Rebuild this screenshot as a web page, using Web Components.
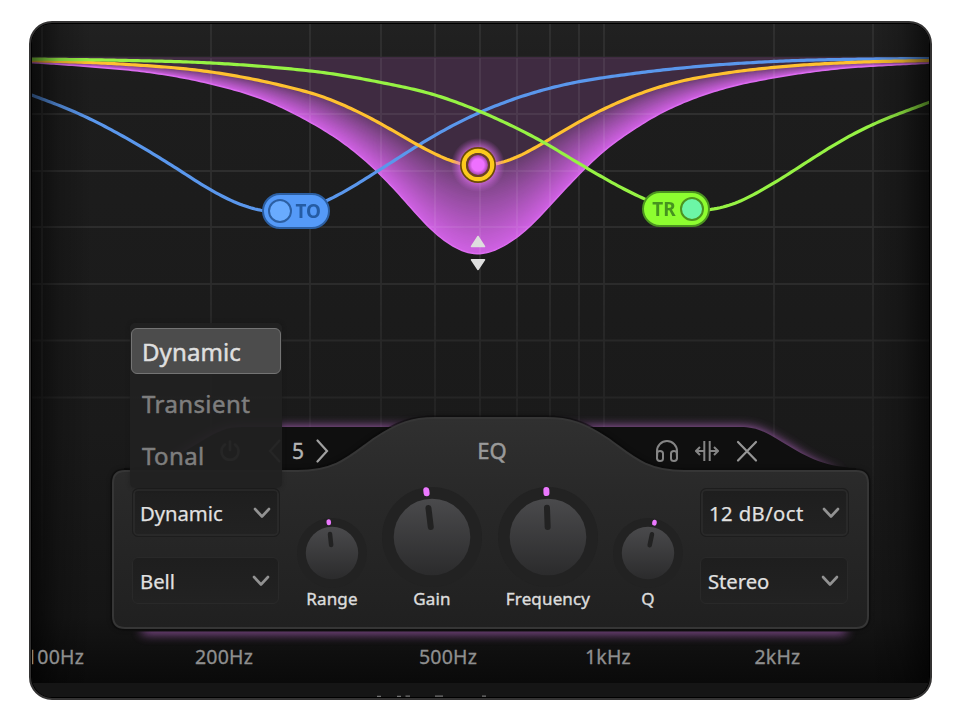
<!DOCTYPE html>
<html lang="en">
<head>
<meta charset="utf-8">
<title>Equalizer</title>
<style>
html,body{margin:0;height:100%;background:#fff;overflow:hidden}
body{font-family:"Noto Sans","Open Sans",sans-serif}
</style>
</head>
<body>
<eq-window>
  <eq-plot slot="plot"></eq-plot>
  <eq-node slot="overlay" style="left:230px;top:169px" label="TO" tone="blue"></eq-node>
  <eq-node slot="overlay" style="left:610px;top:167px" label="TR" tone="green" flip></eq-node>
  <eq-panel slot="overlay">
    <eq-select slot="left" class="tall">Dynamic</eq-select>
    <eq-select slot="left">Bell</eq-select>
    <eq-knob slot="knobs" size="72" angle="-6">Range</eq-knob>
    <eq-knob slot="knobs" size="104" angle="-7">Gain</eq-knob>
    <eq-knob slot="knobs" size="104" angle="-2">Frequency</eq-knob>
    <eq-knob slot="knobs" size="72" angle="12">Q</eq-knob>
    <eq-select slot="right" class="tall" style="letter-spacing:.4px;padding-left:8px">12 dB/oct</eq-select>
    <eq-select slot="right">Stereo</eq-select>
  </eq-panel>
  <eq-menu slot="overlay">
    <eq-option selected>Dynamic</eq-option>
    <eq-option>Transient</eq-option>
    <eq-option>Tonal</eq-option>
  </eq-menu>
  <eq-axis slot="overlay"></eq-axis>
</eq-window>
<script>
const define = (name, html, setup) => customElements.define(name, class extends HTMLElement {
  connectedCallback() {
    if (this.shadowRoot) return;
    const t = document.createElement('template');
    t.innerHTML = typeof html === 'function' ? html(this) : html;
    this.attachShadow({mode: 'open'}).append(t.content.cloneNode(true));
    if (setup) setup(this);
  }
});

define('eq-window', `<style>
:host{display:block;box-sizing:border-box;width:903px;height:679px;margin:21px 0 0 29px;border:2px solid #343333;border-radius:23px;background:#000;padding:1px;overflow:hidden}
.in{position:relative;width:897px;height:673px;border-radius:20px;overflow:hidden;background:#1b1b1b}
</style><div class="in"><slot name="plot"></slot><slot name="overlay"></slot></div>`);

/* Cubic Hermite value of a point list at x */
function sample(p, x) {
  let i = 0;
  while (i < p.length - 2 && p[i + 1][0] < x) i++;
  const slope = (a, b) => (b[1] - a[1]) / (b[0] - a[0]);
  if (x < p[0][0]) return p[0][1] + slope(p[0], p[1]) * (x - p[0][0]);
  const last = p[p.length - 1];
  if (x > last[0]) return last[1] + slope(p[p.length - 2], last) * (x - last[0]);
  const tan = j => {
    if (j === 0) return slope(p[0], p[1]);
    if (j === p.length - 1) return slope(p[j - 1], p[j]);
    const h0 = p[j][0] - p[j - 1][0], h1 = p[j + 1][0] - p[j][0];
    return (slope(p[j - 1], p[j]) * h1 + slope(p[j], p[j + 1]) * h0) / (h0 + h1);
  };
  const b = p[i], c = p[i + 1], w = c[0] - b[0], t = (x - b[0]) / w;
  const m1 = tan(i) * w, m2 = tan(i + 1) * w, t2 = t * t, t3 = t2 * t;
  return (2*t3 - 3*t2 + 1) * b[1] + (t3 - 2*t2 + t) * m1 + (3*t2 - 2*t3) * c[1] + (t3 - t2) * m2;
}
const control = {
  green: [[30,59],[120,60.3],[211,63],[273,67.3],[330,73.5],[381,82.5],[435,95],[480,111.5],[543,142],[585,167],[630,192],[660,205],[685,210.5],[710,209.5],[730,205],[773,183.5],[807,162],[847,137.5],[873,124.5],[930,102]],
  blue: [[30,94.5],[63,107],[87,117.5],[127,138.5],[172,165.500],[211,190],[237,203],[262,210.5],[285,212],[306,208.500],[330,199],[377,171.5],[418,145.500],[450,127],[482,111.5],[520,97],[563,85],[630,74],[687,67.5],[773,61.5],[873,59],[930,58.5]],
  orange: [[30,60.5],[120,64],[211,72],[273,83.500],[330,99.500],[373,119.500],[418,145],[443,157.500],[460,163.5],[478,166],[497,163.5],[517,157],[543,143],[577,123],[625,99.500],[670,84],[720,74],[773,67.5],[850,62.5],[930,60.5]],
  pink: [[30,62.5],[87,66.5],[153,73],[211,84],[267,101],[307,120.5],[330,134],[350,148],[375,169.5],[397,192],[433,231],[453,246],[478,254],[503,246],[523,232.5],[560,194.5],[585,168.5],[607,148.5],[630,132],[653,117.5],[690,100],[730,87],[773,78],[827,70],[930,63]]
};
/* Curves resampled every 3px and smoothed; the second pass gives back the depth of the dip */
const X0 = -30, STEP = 3, COUNT = 341;
function smooth(a, sigma) {
  const R = Math.ceil(sigma), w = [];
  for (let k = -3 * R; k <= 3 * R; k++) w.push(Math.exp(-k * k / (2 * sigma * sigma)));
  return a.map((_, i) => {
    let s = 0, n = 0;
    w.forEach((g, j) => { const k = i + j - 3 * R; if (k >= 0 && k < a.length) { s += g * a[k]; n += g; } });
    return s / n;
  });
}
const curves = {};
for (const name in control) {
  const raw = Array.from({length: COUNT}, (_, i) => sample(control[name], X0 + i * STEP));
  const g = smooth(raw, 4), gg = smooth(g, 4);
  curves[name] = g.map((v, i) => 2 * v - gg[i]);
}
const first = 20, end = 321;
const line = ys => 'M' + ys.slice(first, end).map((y, i) => `${X0 + (i + first) * STEP} ${y.toFixed(2)}`).join('L');
function gradientBands() {
  const from = [94,58,99], to = [207,97,226], N = 48; let s = '';
  for (let k = N; k >= 0; k--) {
    const t = k / N, f = Math.pow(t, .8);
    const col = from.map((v, i) => Math.round(v + (to[i] - v) * f));
    s += `<path d="${line(curves.orange.map((y, i) => y * (1 - t) + curves.pink[i] * t))}V58H30Z" fill="rgb(${col})"/>`;
  }
  return s;
}
const tab = 'M124 468C160 467 180 454 200 442C218 431 226 427 242 427H740C756 427 764 431 782 442C802 454 822 467 856 468V480H124Z';
const glow = 'M140 472C165 467 180 454 200 442C218 431 226 427 242 427H740C756 427 764 431 782 442C802 454 815 465 842 472Z';
define('eq-plot', () => {
  const vs = [42,211,310,381,435,480,517,550,579,604,774,873], hs = [57.5,114,171,227,284,340.5,397.5];
  const grid = vs.map(x => `M${x} 24V683`).join('') + hs.map(y => `M32 ${y}H930`).join('');
  return `<style>:host{display:block}svg{display:block}</style>
<svg width="897" height="673" viewBox="32 24 897 673">
<defs>
<linearGradient id="bg" x2="0" y2="1"><stop offset="0" stop-color="#212121"/><stop offset=".09" stop-color="#1d1d1d"/><stop offset=".62" stop-color="#1a1a1a"/><stop offset=".9" stop-color="#151515"/><stop offset="1" stop-color="#0a0a0a"/></linearGradient>
<linearGradient id="gm" gradientUnits="userSpaceOnUse" x1="0" x2="0" y1="24" y2="683"><stop offset="0" stop-color="#fff"/><stop offset=".35" stop-color="#fff" stop-opacity=".8"/><stop offset=".6" stop-color="#fff" stop-opacity=".45"/><stop offset=".72" stop-color="#fff" stop-opacity=".25"/><stop offset=".9" stop-color="#fff" stop-opacity="0"/></linearGradient>
<mask id="mk"><rect x="32" y="24" width="897" height="659" fill="url(#gm)"/></mask>
<linearGradient id="vl"><stop offset="0" stop-color="#000" stop-opacity=".6"/><stop offset=".45" stop-color="#000" stop-opacity=".2"/><stop offset="1" stop-color="#000" stop-opacity="0"/></linearGradient>
<linearGradient id="vr" x1="1" x2="0"><stop offset="0" stop-color="#000" stop-opacity=".6"/><stop offset=".45" stop-color="#000" stop-opacity=".2"/><stop offset="1" stop-color="#000" stop-opacity="0"/></linearGradient>
<radialGradient id="halo"><stop offset=".62" stop-color="#e878f8" stop-opacity=".7"/><stop offset="1" stop-color="#d060e0" stop-opacity="0"/></radialGradient>
<radialGradient id="core"><stop offset=".6" stop-color="#ee70ff"/><stop offset="1" stop-color="#a044a8"/></radialGradient>
<filter id="bl" x="-10%" y="-40%" width="120%" height="180%"><feGaussianBlur stdDeviation="5.500"/></filter>
<clipPath id="low"><rect x="32" y="631.500" width="897" height="30"/></clipPath>
<clipPath id="fc"><path d="${line(curves.pink)}V58H30Z"/></clipPath>
</defs>
<rect x="32" y="24" width="897" height="659" fill="url(#bg)"/>
<path d="${grid}" stroke="#313131" stroke-width="1.800" mask="url(#mk)"/>
<g>${gradientBands()}</g>
<path d="${line(curves.orange)}V57H30Z" fill="#3f2b41"/>
<path d="${grid}" stroke="#fff" stroke-opacity=".065" stroke-width="2" clip-path="url(#fc)"/>
<g fill="none" stroke-width="3.200">
<path d="${line(curves.pink)}" stroke="#dc6cf0" stroke-width="1.500"/>
<path d="${line(curves.blue)}" stroke="#5a97ec"/>
<path d="${line(curves.orange)}" stroke="#ffc130"/>
<path d="${line(curves.green)}" stroke="#96f244"/>
</g>
<circle cx="478" cy="165" r="27" fill="url(#halo)"/>
<circle cx="478" cy="165" r="18" fill="#6a4a05"/>
<circle cx="478" cy="165" r="14.200" fill="#713b6b" stroke="#fccb1c" stroke-width="4.300"/>
<circle cx="478" cy="165" r="12" fill="#6a4220"/>
<circle cx="478" cy="165" r="10" fill="url(#core)"/>
<path d="M478 236.500L484.500 246.500H471.500ZM478 269.500L484.500 259.800H471.500Z" fill="#dedede" stroke="#dedede" stroke-width="1.500" stroke-linejoin="round"/>
<path d="${glow}" fill="#b868c8" opacity=".95" filter="url(#bl)"/>
<g clip-path="url(#low)"><rect x="142" y="600" width="704" height="34" fill="#a860b8" opacity=".8" filter="url(#bl)"/></g>
<path d="${tab}" fill="#0f0f0f"/>
<rect x="32" y="24" width="60" height="659" fill="url(#vl)"/>
<rect x="869" y="24" width="60" height="659" fill="url(#vr)"/>
<rect x="32" y="683" width="897" height="14" fill="#151515"/>
<path d="M377 696.400H381M397 696.400H401M405.500 696.200H410M435 696.200H443M482 696.200H486" stroke="#8a8a8a" stroke-width="1.200" opacity=".8"/>
</svg>`;
});

define('eq-node', e => `<style>
:host{position:absolute;display:flex;align-items:center;box-sizing:border-box;width:68px;height:36px;border-radius:18px;padding:0 6px 0 4px;gap:3px;font:700 19.500px "Noto Sans",sans-serif;
 --f:#559af8;--b:#2c5fa3;--d:#69abff;--t:#255ca4;background:var(--f);border:2px solid var(--b)}
:host([tone=green]){--f:#8dfd30;--b:#4c9420;--d:#6cf6a6;--t:#46931f}
:host([flip]){flex-direction:row-reverse;padding:0 4px 0 6px;gap:4px}
i{box-sizing:border-box;width:24px;height:24px;border-radius:50%;background:var(--d);border:2.500px solid var(--b);flex:none}
span{color:var(--t);line-height:30px;transform:scaleX(.97)}
</style><i></i><span>${e.getAttribute('label')}</span>`);

const body = 'M113 483Q113 471 125 471H298C338 471 352 454 375 438C398 423 412 418 435 418H546C570 418 584 423 607 438C630 454 644 471 684 471H856Q868 471 868 483V616Q868 628 856 628H125Q113 628 113 616Z';
define('eq-panel', `<style>
:host{position:absolute;left:80px;top:393px;width:757px;height:212px}
.bg{position:absolute;left:-10px;top:-10px}
.wrap{position:relative;height:212px;display:grid;grid-template-rows:53px 159px}
header{display:grid;grid-template-columns:1fr auto 1fr;align-items:start;color:#9b9b9b}
.l{display:flex;align-items:center;padding:22px 0 0 107px;height:24px}
.n{font:400 21px/24px "Noto Sans",sans-serif;margin:0 12px 0 10px;color:#b4b4b4;-webkit-text-stroke:.4px currentColor}
h1{margin:0;font:400 22px/30px "Noto Sans",sans-serif;padding:18px 0 0 3px;-webkit-text-stroke:.5px #999}
.r{display:flex;gap:16px;padding:22px 0 0 148px;align-items:center;justify-content:flex-start}
svg{display:block;flex:none}
main{display:grid;grid-template-columns:148px 400px 149px;padding-left:20px;column-gap:4px}
.s{display:flex;flex-direction:column;gap:20px;padding-top:18px}
.s.b{margin-left:12px;width:149px}
.k{display:grid;grid-template-columns:96px 104px 128px 72px;align-items:end;padding-bottom:20px}
</style>
<svg class="bg" width="777" height="232" viewBox="102 407 777 232"><defs><linearGradient id="p" x2="0" y2="1"><stop offset="0" stop-color="#303030"/><stop offset=".35" stop-color="#292929"/><stop offset="1" stop-color="#202020"/></linearGradient>
<filter id="s" x="-5%" y="-10%" width="110%" height="120%"><feGaussianBlur stdDeviation="3"/></filter></defs>
<path d="${body}" fill="#0b0b0b" opacity=".6" filter="url(#s)"/>
<path d="${body}" fill="url(#p)" stroke="#0b0b0b" stroke-width="5" stroke-opacity=".55"/>
<path d="${body}" fill="url(#p)" stroke="#363636" stroke-width="2"/></svg>
<div class="wrap"><header>
<div class="l"><svg width="22" height="24" viewBox="0 0 22 24" fill="none" stroke="#777" stroke-width="2.500" stroke-linecap="round"><path d="M11 2.500V11M6 5.500A8.500 8.500 0 1 0 16 5.500"/></svg>
<svg width="14" height="24" viewBox="0 0 14 24" style="margin-left:27px" fill="none" stroke="#777" stroke-width="2"><path d="M12 1L2 12L12 23"/></svg>
<span class="n">5</span>
<svg width="14" height="24" viewBox="0 0 14 24" fill="none" stroke="#a0a0a0" stroke-width="2.200" stroke-linecap="round"><path d="M1.500 1.500L11 12L1.500 22.500"/></svg></div>
<h1>EQ</h1>
<div class="r">
<svg width="24" height="24" viewBox="0 0 24 24" fill="none" stroke="#858585" stroke-width="2"><path d="M2 20V12A10 10 0 0 1 22 12V20M2.300 13.500Q3 12 5 12Q8 12 8 14.500V19.500Q8 22 5 22Q2 22 2 19ZM21.700 13.500Q21 12 19 12Q16 12 16 14.500V19.500Q16 22 19 22Q22 22 22 19Z"/></svg>
<svg width="24" height="24" viewBox="0 0 24 24" fill="none" stroke="#858585" stroke-width="2"><path d="M9.300 2V22M14.700 2V22M1 12H9M15 12H23M5 8L1 12L5 16M19 8L23 12L19 16"/></svg>
<svg width="24" height="24" viewBox="0 0 24 24" fill="none" stroke="#969696" stroke-width="2.200" stroke-linecap="round"><path d="M3 3L21 21.500M21 3L3 21.500"/></svg>
</div></header>
<main><div class="s"><slot name="left"></slot></div><div class="k"><slot name="knobs"></slot></div><div class="s b"><slot name="right"></slot></div></main></div>`);

define('eq-select', `<style>
:host{display:flex;align-items:center;justify-content:space-between;box-sizing:border-box;height:47px;margin-right:1px;padding:0 8px 0 7px;border:1.500px solid #292929;border-radius:6px;background:linear-gradient(#1e1e1e,#222);color:#e2e2e2;font:400 20.300px "Noto Sans",sans-serif;letter-spacing:-.05px}
:host(.tall){height:49px;margin-right:0;border-color:#1d1d1d;box-shadow:inset 0 0 0 2px #292929}
span{line-height:28px;-webkit-text-stroke:.25px #ddd}
svg{display:block}
</style><span><slot></slot></span><svg width="18" height="12" viewBox="0 0 18 12" fill="none" stroke="#929292" stroke-width="2.600" stroke-linecap="round" stroke-linejoin="round"><path d="M2 2L9 9.500L16 2"/></svg>`);

define('eq-knob', e => {
  const s = +e.getAttribute('size'), a = e.getAttribute('angle'), c = s / 2, big = s > 80;
  const r = big ? 38.3 : 26.2, ring = big ? 50 : 35;
  const m = big ? [c - 50, 6, 9] : [c - 34, 4.5, 6];
  return `<style>
:host{display:flex;flex-direction:column;align-items:center;color:#dcdcdc;font:400 17px/20px "Noto Sans",sans-serif;letter-spacing:.15px}
svg{display:block}span{-webkit-text-stroke:.4px #dcdcdc}
</style><svg width="${s}" height="${s}" viewBox="0 0 ${s} ${s}"><defs><linearGradient id="g" x2="0" y2="1"><stop offset="0" stop-color="#4a4a4c"/><stop offset="1" stop-color="#2b2b2c"/></linearGradient></defs>
<circle cx="${c}" cy="${c}" r="${ring}" fill="#222"/><circle cx="${c}" cy="${c}" r="${r}" fill="url(#g)"/>
<g transform="rotate(${a} ${c} ${c})"><rect x="${c - m[1] / 2}" y="${m[0]}" width="${m[1]}" height="${m[2]}" rx="${m[1] / 2}" fill="#ec78ff"/>
<path d="M${c} ${c - r + (big ? 9 : 7)}V${c - (big ? 10 : 8)}" stroke="#222" stroke-width="${big ? 6 : 4.5}" stroke-linecap="round"/></g></svg><span><slot></slot></span>`;
});

define('eq-menu', `<style>
:host{position:absolute;left:98px;top:299px;width:152px;height:165px;box-sizing:border-box;padding:5px 1px 0;border-radius:5px;background:rgba(33,33,33,.94);display:flex;flex-direction:column;gap:6px;box-shadow:0 0 4px rgba(20,20,20,.4)}
</style><slot></slot>`);
define('eq-option', `<style>
:host{display:block;box-sizing:border-box;height:46px;padding-left:10px;border:1.500px solid transparent;border-radius:6px;color:#7e7e7e;font:400 24px/46px "Noto Sans",sans-serif;-webkit-text-stroke:.5px currentColor;letter-spacing:.4px}
:host([selected]){background:#4c4c4c;border-color:#747474;color:#dfdfdf;letter-spacing:.1px}
</style><slot></slot>`);

define('eq-axis', () => {
  const t = [['100Hz',23],['200Hz',192],['500Hz',416],['1kHz',576],['2kHz',745.5]];
  return `<style>
:host{position:absolute;inset:0;color:#8f8f8f;font:400 19.500px/26px "Noto Sans",sans-serif;letter-spacing:.2px}
span{position:absolute;top:620px;transform:translateX(-50%);-webkit-text-stroke:.3px currentColor;white-space:nowrap}
</style>${t.map(([s, x]) => `<span style="left:${x}px">${s}</span>`).join('')}`;
});
</script>
</body>
</html>
